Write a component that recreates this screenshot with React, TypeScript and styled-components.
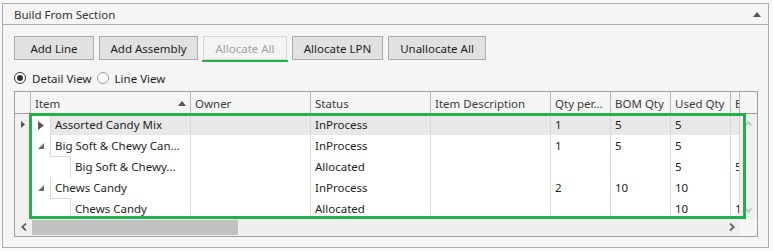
import React from "react";
import styled, { createGlobalStyle } from "styled-components";

const GlobalStyle = createGlobalStyle`
  body {
    margin: 0;
    background: #f9f9f9;
    font-family: "Noto Sans", "Open Sans", sans-serif;
    font-size: 11.5px;
    color: #1e1e1e;
  }
`;

const COLS = "16px 160px 120px 120px 120px 60px 60px 60px 9px";
const GREEN = "#22b14c";

type Row = {
  item: string;
  level: 0 | 1;
  expander?: "collapsed" | "expanded";
  selected?: boolean;
  status: string;
  qtyPer: string;
  bom: string;
  used: string;
  b: string;
};

const rows: Row[] = [
  { item: "Assorted Candy Mix", level: 0, expander: "collapsed", selected: true, status: "InProcess", qtyPer: "1", bom: "5", used: "5", b: "" },
  { item: "Big Soft & Chewy Can...", level: 0, expander: "expanded", status: "InProcess", qtyPer: "1", bom: "5", used: "5", b: "" },
  { item: "Big Soft & Chewy...", level: 1, status: "Allocated", qtyPer: "", bom: "", used: "5", b: "5" },
  { item: "Chews Candy", level: 0, expander: "expanded", status: "InProcess", qtyPer: "2", bom: "10", used: "10", b: "" },
  { item: "Chews Candy", level: 1, status: "Allocated", qtyPer: "", bom: "", used: "10", b: "1" },
];

const buttons = [
  { label: "Add Line", width: 80 },
  { label: "Add Assembly", width: 99 },
  { label: "Allocate All", width: 84, disabled: true },
  { label: "Allocate LPN", width: 91 },
  { label: "Unallocate All", width: 98 },
];

export default function App() {
  return (
    <>
      <GlobalStyle />
      <Panel>
        <TitleBar>
          <span>Build From Section</span>
          <svg width="8" height="5" viewBox="0 0 8 5">
            <path d="M0 5 L4 0 L8 5 Z" fill="#555" />
          </svg>
        </TitleBar>
        <Body>
          <Toolbar>
            {buttons.map((b) => (
              <Button key={b.label} $width={b.width} disabled={b.disabled} $marked={b.disabled}>
                {b.label}
              </Button>
            ))}
          </Toolbar>
          <RadioRow>
            <RadioLabel>
              <RadioDot $checked />
              Detail View
            </RadioLabel>
            <RadioLabel>
              <RadioDot />
              Line View
            </RadioLabel>
          </RadioRow>
          <Grid>
            <HeaderRow>
              <HeaderCell />
              <HeaderCell>
                Item
                <svg width="8" height="5" viewBox="0 0 8 5" style={{ marginLeft: "auto", marginRight: 4 }}>
                  <path d="M0 5 L4 0 L8 5 Z" fill="#555" />
                </svg>
              </HeaderCell>
              <HeaderCell>Owner</HeaderCell>
              <HeaderCell>Status</HeaderCell>
              <HeaderCell>Item Description</HeaderCell>
              <HeaderCell>Qty per...</HeaderCell>
              <HeaderCell>BOM Qty</HeaderCell>
              <HeaderCell>Used Qty</HeaderCell>
              <HeaderCell>B</HeaderCell>
              <HeaderFiller />
            </HeaderRow>
            <BodyArea>
              <Rows>
                {rows.map((r, i) => (
                  <DataRow key={i}>
                    <RowHeader>
                      {r.selected && (
                        <svg width="4" height="7" viewBox="0 0 4 7">
                          <path d="M0 0 L4 3.5 L0 7 Z" fill="#555" />
                        </svg>
                      )}
                    </RowHeader>
                    <ItemCell>
                      <Expander>
                        {r.expander === "collapsed" && (
                          <svg width="6" height="9" viewBox="0 0 6 9">
                            <path d="M0 0 L6 4.5 L0 9 Z" fill="#595959" />
                          </svg>
                        )}
                        {r.expander === "expanded" && (
                          <svg width="6" height="6" viewBox="0 0 6 6">
                            <path d="M6 0 L6 6 L0 6 Z" fill="#6a6a6a" />
                          </svg>
                        )}
                      </Expander>
                      {r.level === 1 && <Indent />}
                      <ItemText $selected={r.selected}>{r.item}</ItemText>
                    </ItemCell>
                    <Cell $selected={r.selected} />
                    <Cell $selected={r.selected}>{r.status}</Cell>
                    <Cell $selected={r.selected} />
                    <Cell $selected={r.selected}>{r.qtyPer}</Cell>
                    <Cell $selected={r.selected}>{r.bom}</Cell>
                    <Cell $selected={r.selected}>{r.used}</Cell>
                    <Cell $selected={r.selected}>{r.b}</Cell>
                  </DataRow>
                ))}
              </Rows>
              <VScroll>
                <svg width="7" height="5" viewBox="0 0 7 5">
                  <path d="M0.5 4.5 L3.5 1 L6.5 4.5" stroke="#bdbdbd" strokeWidth="1.5" fill="none" />
                </svg>
                <svg width="7" height="5" viewBox="0 0 7 5">
                  <path d="M0.5 0.5 L3.5 4 L6.5 0.5" stroke="#bdbdbd" strokeWidth="1.5" fill="none" />
                </svg>
              </VScroll>
            </BodyArea>
            <HScrollRow>
              <HTrack>
                <ArrowBox>
                  <svg width="6" height="8" viewBox="0 0 6 8">
                    <path d="M5 0.5 L1.2 4 L5 7.5" stroke="#606060" strokeWidth="1.8" fill="none" />
                  </svg>
                </ArrowBox>
                <Thumb />
                <ArrowBox style={{ marginLeft: "auto" }}>
                  <svg width="6" height="8" viewBox="0 0 6 8">
                    <path d="M1 0.5 L4.8 4 L1 7.5" stroke="#606060" strokeWidth="1.8" fill="none" />
                  </svg>
                </ArrowBox>
              </HTrack>
              <Corner />
            </HScrollRow>
            <Highlight />
          </Grid>
        </Body>
      </Panel>
    </>
  );
}

const Panel = styled.div`
  margin: 3px 0 0 2px;
  width: 767px;
  height: 245px;
  box-sizing: border-box;
  border: 1px solid #acacac;
  background: #f5f5f5;
`;

const TitleBar = styled.div`
  height: 21px;
  box-sizing: border-box;
  border-bottom: 1px solid #acacac;
  padding: 1px 7px 0 11px;
  display: flex;
  align-items: center;
  justify-content: space-between;
  color: #333;
`;

const Body = styled.div`
  padding: 11px 0 0 11px;
`;

const Toolbar = styled.div`
  display: flex;
  gap: 5px;
  height: 24px;
`;

const Button = styled.button<{ $width: number; $marked?: boolean }>`
  position: relative;
  width: ${(p) => p.$width}px;
  height: 24px;
  box-sizing: border-box;
  border: 1px solid #adadad;
  background: #e1e1e1;
  color: #1e1e1e;
  font-family: inherit;
  font-size: 11.5px;
  padding: 1px 0 0;

  &:disabled {
    background: #f4f4f4;
    border-color: #d5d5d5;
    color: #a2a2a2;
  }

  ${(p) =>
    p.$marked &&
    `
    &::after {
      content: "";
      position: absolute;
      left: -2px;
      right: -2px;
      bottom: -3px;
      height: 2px;
      background: ${GREEN};
    }
  `}
`;

const RadioRow = styled.div`
  display: flex;
  align-items: center;
  gap: 5px;
  height: 14px;
  margin-top: 11px;
`;

const RadioLabel = styled.label`
  display: flex;
  align-items: center;
  gap: 6px;
  color: #1e1e1e;
`;

const RadioDot = styled.span<{ $checked?: boolean }>`
  width: 12px;
  height: 12px;
  box-sizing: border-box;
  border-radius: 50%;
  border: 1px solid ${(p) => (p.$checked ? "#333" : "#999")};
  background: #fff;
  display: flex;
  align-items: center;
  justify-content: center;

  &::after {
    content: "";
    width: 6px;
    height: 6px;
    border-radius: 50%;
    background: ${(p) => (p.$checked ? "#333" : "transparent")};
  }
`;

const Grid = styled.div`
  position: relative;
  margin-top: 6px;
  width: 744px;
  height: 146px;
  box-sizing: border-box;
  border: 1px solid #a0a0a0;
  background: #fff;
`;

const HeaderRow = styled.div`
  display: grid;
  grid-template-columns: ${COLS} 17px;
  height: 22px;
  box-sizing: border-box;
  border-bottom: 1px solid #a0a0a0;
  background: #f5f5f5;
`;

const HeaderCell = styled.div`
  display: flex;
  align-items: center;
  padding: 1px 0 0 4px;
  border-right: 1px solid #b8b8b8;
  overflow: hidden;
  white-space: nowrap;
  color: #3c3c3c;
`;

const HeaderFiller = styled.div``;

const BodyArea = styled.div`
  display: flex;
  height: 104px;
`;

const Rows = styled.div`
  width: 725px;
  overflow: hidden;
`;

const DataRow = styled.div`
  display: grid;
  grid-template-columns: ${COLS};
  height: 21px;
`;

const Cell = styled.div<{ $selected?: boolean }>`
  padding-left: 4px;
  line-height: 21px;
  border-right: 1px solid #d9d9d9;
  border-bottom: 1px solid #d9d9d9;
  background: ${(p) => (p.$selected ? "#e8e8e8" : "#fff")};
  white-space: nowrap;
  overflow: hidden;
`;

const RowHeader = styled.div`
  display: flex;
  align-items: center;
  justify-content: center;
  background: #f0f0f0;
  border-right: 1px solid #a0a0a0;
  border-bottom: 1px solid #d9d9d9;
`;

const ItemCell = styled.div`
  display: flex;
  border-right: 1px solid #d9d9d9;
  min-width: 0;
`;

const Expander = styled.div`
  width: 19px;
  flex: none;
  display: flex;
  align-items: center;
  justify-content: center;
  padding-left: 1px;
  box-sizing: border-box;
`;

const Indent = styled.div`
  width: 20px;
  flex: none;
  border-bottom: 1px solid #d9d9d9;
`;

const ItemText = styled.div<{ $selected?: boolean }>`
  flex: 1;
  min-width: 0;
  padding-left: 4px;
  line-height: 21px;
  border-left: 1px solid #d9d9d9;
  border-bottom: 1px solid #d9d9d9;
  background: ${(p) => (p.$selected ? "#e8e8e8" : "#fff")};
  white-space: nowrap;
  overflow: hidden;
`;

const VScroll = styled.div`
  width: 17px;
  background: #f0f0f0;
  display: flex;
  flex-direction: column;
  align-items: center;
  justify-content: space-between;
  padding: 7px 0 5px;
  box-sizing: border-box;
`;

const HScrollRow = styled.div`
  display: flex;
  height: 18px;
`;

const HTrack = styled.div`
  width: 725px;
  display: flex;
  background: #efefef;
`;

const ArrowBox = styled.div`
  width: 17px;
  display: flex;
  align-items: center;
  justify-content: center;
`;

const Thumb = styled.div`
  width: 206px;
  height: 15px;
  margin-top: 2px;
  background: #c2c2c2;
`;

const Corner = styled.div`
  flex: 1;
  background: #f5f5f5;
`;

const Highlight = styled.div`
  position: absolute;
  left: 14px;
  top: 21px;
  width: 717px;
  height: 106px;
  box-sizing: border-box;
  border: 3px solid ${GREEN};
  pointer-events: none;
`;
